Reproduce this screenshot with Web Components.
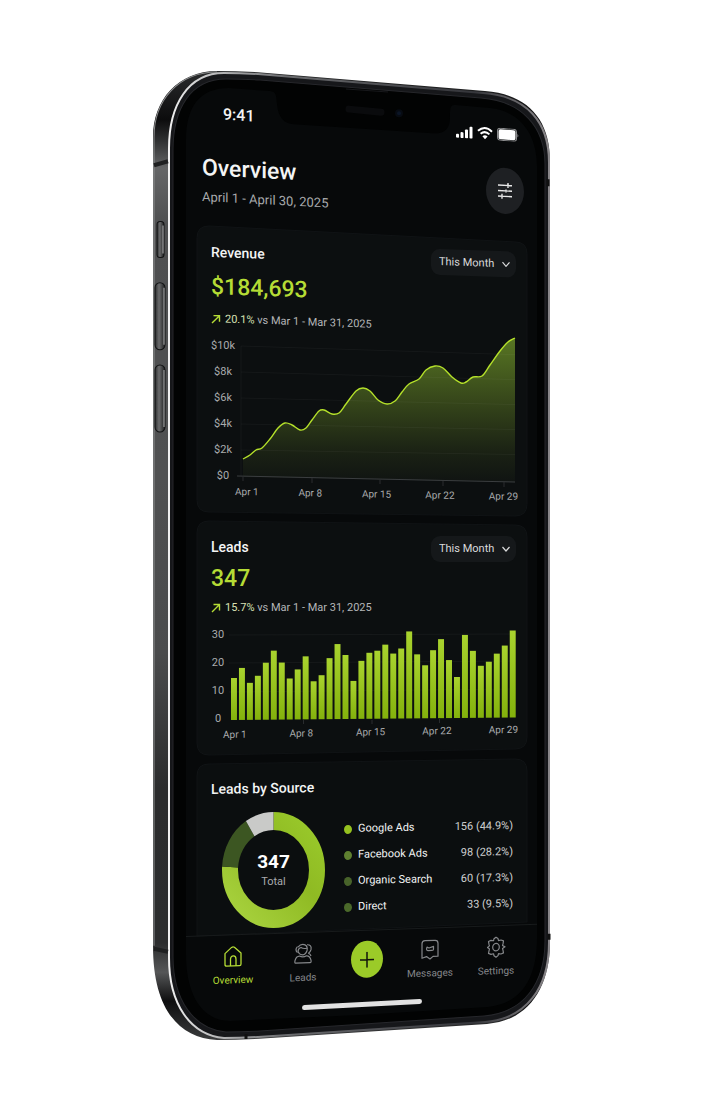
<!DOCTYPE html>
<html lang="en">
<head>
<meta charset="utf-8">
<meta name="viewport" content="width=device-width, initial-scale=1">
<title>Overview</title>
<style>
  body {
    margin: 0;
    background: #fff;
    color: #f4f5f5;
    font-family: Roboto, "Liberation Sans", sans-serif;
    font-size: 11px;
    line-height: 16px;
    --lime: #b5dc35;
    --muted: #a9abad;
  }
  main {
    display: flex;
    justify-content: center;
    padding: 68px 16px 64px;
  }
</style>
</head>
<body>
<main>
  <phone-frame>
    <status-bar></status-bar>
    <page-header heading="Overview">April 1 - April 30, 2025</page-header>
    <card-stack>
      <metric-card heading="Revenue" value="$184,693" change="20.1%" head-tilt="steep" top="16" bottom="4">
        <line-chart slot="chart"></line-chart>
      </metric-card>
      <metric-card heading="Leads" value="347" change="15.7%" compact top="4" bottom="-6">
        <bar-chart slot="chart"></bar-chart>
      </metric-card>
      <source-card></source-card>
    </card-stack>
    <tab-bar></tab-bar>
  </phone-frame>
</main>

<script>
  // Panel behind a card, its top and bottom edges tilted with the phone
  function panel(width, height, top, bottom, radius, fill) {
    const r = radius
    const b = height
    const base = radius && bottom !== -14
      ? `V${b + bottom - r} Q${width} ${b + bottom} ${width - r} ${b + bottom} L${r} ${b} Q0 ${b} 0 ${b - r}`
      : `V${b + bottom} L0 ${b}`
    return `
      <svg class='panel' viewBox='0 0 ${width} ${height}' preserveAspectRatio='none' aria-hidden='true'>
        <path d='M0 ${r} Q0 0 ${r} 0 L${width - r} ${top} Q${width} ${top} ${width} ${top + r} ${base} Z'
          fill='${fill}' stroke='#101315' stroke-width='1'/>
      </svg>`
  }

  class PhoneFrame extends HTMLElement {
    connectedCallback() {
      this.attachShadow({ mode: "open" }).innerHTML = `
        <style>
        :host {
          display: block;
          position: relative;
          width: 100%;
          max-width: 400px;
        }
        .body {
          position: absolute;
          inset: 0;
          width: 100%;
          height: 100%;
        }
        .screen {
          position: relative;
          margin: 0 15px 0 34px;
          padding: 36px 0;
        }
        .home {
          width: 120px;
          height: 5px;
          margin: 12px auto 0;
          border-radius: 3px;
          background: #e2e2e2;
          transform: skewY(-3deg);
        }
        </style>
        <svg class='body' viewBox='152 68 400 972' preserveAspectRatio='none' aria-hidden='true'>
          <defs>
            <linearGradient id='side' x1='0' y1='0' x2='0' y2='1'>
              <stop offset='0' stop-color='#2a2b2c'/>
              <stop offset='.05' stop-color='#0c0c0d'/>
              <stop offset='.07' stop-color='#2c2d2e'/>
              <stop offset='.1' stop-color='#656667'/>
              <stop offset='.16' stop-color='#4e4f50'/>
              <stop offset='.42' stop-color='#505152'/>
              <stop offset='.6' stop-color='#4a4b4c'/>
              <stop offset='.74' stop-color='#2b2c2d'/>
              <stop offset='.9' stop-color='#2c2d2e'/>
              <stop offset='.93' stop-color='#555657'/>
              <stop offset='.96' stop-color='#0e0e0f'/>
              <stop offset='1' stop-color='#3a3b3c'/>
            </linearGradient>
            <linearGradient id='rim' x1='0' y1='0' x2='1' y2='0'>
              <stop offset='0' stop-color='#f1f1f1'/>
              <stop offset='.3' stop-color='#6c6d70'/>
              <stop offset='.8' stop-color='#34353a'/>
              <stop offset='1' stop-color='#8a878a'/>
            </linearGradient>
            <linearGradient id='key' x1='0' y1='0' x2='1' y2='0'>
              <stop offset='0' stop-color='#2a2b2c'/>
              <stop offset='.4' stop-color='#6b6c6d'/>
              <stop offset='1' stop-color='#1b1c1d'/>
            </linearGradient>
          </defs>
          <path fill='url(#side)' d='M153 137 C153 100 178 71 217 71 Q235 71 255 72 L485 91 C528 94 550 120 550 160 V940 C550 985 528 1018 487 1021 L255 1036 Q235 1037 217 1037 C178 1035 153 1005 153 943 Z'/>
          <path fill='none' stroke='#8e8f90' stroke-width='1' d='M154 943 V137 C154 100 179 72 217 72'/>
          <path fill='#16171a' stroke='url(#rim)' stroke-width='2' d='M169 148 C169 105 188 73 224 73 Q240 73 258 74 L483 93 C527 96 549 122 549 162 V940 C549 984 527 1016 485 1019 L258 1034 Q240 1035 224 1035 C190 1032 169 1001 169 955 Z'/>
          <path fill='#020303' stroke='#26272b' stroke-width='1' d='M173 150 C173 108 191 79 226 79 Q242 79 260 80 L481 98 C522 101 545 127 545 164 V938 C545 980 524 1010 484 1013 L260 1028 Q242 1029 226 1029 C194 1026 173 998 173 953 Z'/>
          <path fill='#07090a' d='M186 140 C186 106 200 88 229 88 L270 91 C277 92 276 96 277 104 C278 117 284 124 294 124 L432 133 C444 134 450 129 450 117 C450 108 450 104 456 105 L490 108 C520 111 537 134 537 166 V936 C537 977 520 1001 488 1004 L360 1012 L230 1018 C202 1018 186 992 186 952 Z'/>
          <path stroke='#17181b' stroke-width='1' d='M346 89 L388 92'/>
          <path stroke='#0a0b0d' stroke-width='7' stroke-linecap='round' d='M349 109 L381 112'/>
          <circle cx='399' cy='113' r='4' fill='#070b12'/>
          <circle cx='399' cy='113' r='2' fill='#0b1526'/>
          <path stroke='#1f2021' stroke-width='4' d='M154 165 L168 161 M154 946 L168 949'/>
          <path stroke='#111' stroke-width='3' d='M548 186 V179 M549 931 V937 M246 1036 V1031'/>
          <g fill='url(#key)' stroke='#111213' stroke-width='1'>
            <rect x='157' y='221' width='7' height='36' rx='3'/>
            <rect x='155' y='282' width='10' height='67' rx='5'/>
            <rect x='155' y='364' width='10' height='67' rx='5'/>
          </g>
          <path stroke='#b1b2b3' stroke-width='1' d='M163 225 V253 M164 287 V344 M164 369 V426'/>
        </svg>
        <div class='screen'>
          <slot></slot>
          <div class='home'></div>
        </div>
      `
    }
  }

  class StatusBar extends HTMLElement {
    connectedCallback() {
      this.attachShadow({ mode: "open" }).innerHTML = `
        <style>
        :host {
          display: flex;
          justify-content: space-between;
          align-items: center;
          padding: 0 18px 0 37px;
          transform: skewY(4deg);
          transform-origin: 60px 0;
        }
        time {
          font-size: 16px;
          line-height: 24px;
          font-weight: 500;
        }
        .signs {
          display: flex;
          align-items: center;
          gap: 4px;
        }
        svg {
          display: block;
          fill: #fff;
        }
        </style>
        <time>9:41</time>
        <div class='signs'>
          <svg width='17' height='13' viewBox='0 0 17 13' aria-label='Signal'>
            <rect x='0' y='9' width='3' height='4' rx='1'/>
            <rect x='4.5' y='7' width='3' height='6' rx='1'/>
            <rect x='9' y='4' width='3' height='9' rx='1'/>
            <rect x='13.5' y='1' width='3' height='12' rx='1'/>
          </svg>
          <svg width='16' height='13' viewBox='0 0 16 13' aria-label='Wi-Fi'>
            <path d='M1 4.6 Q8 -2 15 4.6 M3.6 7.4 Q8 3.4 12.4 7.4' fill='none' stroke='#fff' stroke-width='2'/>
            <path d='M5.4 9.6 Q8 7.4 10.6 9.6 L8 12.6 Z'/>
          </svg>
          <svg width='22' height='13' viewBox='0 0 22 13' aria-label='Battery'>
            <rect x='.5' y='.5' width='19' height='12' rx='3' fill='none' stroke='#8b8c8e'/>
            <rect x='1.5' y='1.5' width='17' height='10' rx='2'/>
            <path d='M20.5 4.5 Q22 6.5 20.5 8.5 Z' fill='#a0a0a2'/>
          </svg>
        </div>
      `
    }
  }

  class PageHeader extends HTMLElement {
    connectedCallback() {
      this.attachShadow({ mode: "open" }).innerHTML = `
        <style>
        :host {
          display: flex;
          justify-content: space-between;
          align-items: flex-start;
          margin: 24px 13px 19px 16px;
          transform: skewY(3deg);
          transform-origin: 0 0;
        }
        h1 {
          margin: 0;
          font-size: 23px;
          line-height: 32px;
          font-weight: 500;
        }
        p {
          margin: 3px 0 0;
          font-size: 13px;
          line-height: 20px;
          color: var(--muted);
        }
        button {
          width: 38px;
          height: 46px;
          padding: 0;
          border: 0;
          border-radius: 50%;
          background: #1e2023;
          display: grid;
          place-items: center;
        }
        </style>
        <div>
          <h1>${this.getAttribute("heading")}</h1>
          <p><slot></slot></p>
        </div>
        <button type='button' aria-label='Filters'>
          <svg width='16' height='18' viewBox='0 0 16 18' fill='none' stroke='#e8e8e8' stroke-width='1.4'>
            <path d='M1 3.5 H15 M1 9 H15 M1 14.5 H15 M11 1 V6 M9 7.5 V10.5 M5 12 V17'/>
          </svg>
        </button>
      `
    }
  }

  class CardStack extends HTMLElement {
    connectedCallback() {
      this.attachShadow({ mode: "open" }).innerHTML = `
        <style>
        :host {
          display: flex;
          flex-direction: column;
          gap: 9px;
          padding: 0 10px 0 11px;
        }
        </style>
        <slot></slot>
      `
    }
  }

  class MetricCard extends HTMLElement {
    connectedCallback() {
      const compact = this.hasAttribute("compact")
      const top = Number(this.getAttribute("top"))
      const bottom = Number(this.getAttribute("bottom"))
      this.attachShadow({ mode: "open" }).innerHTML = `
        <style>
        :host {
          display: block;
          position: relative;
          padding: 15px 14px 12px;
          --gap: 8px;
        }
        :host([compact]) {
          --gap: 5px;
        }
        .panel {
          position: absolute;
          inset: 0;
          width: 100%;
          height: 100%;
          overflow: visible;
        }
        .head {
          position: relative;
          display: flex;
          justify-content: space-between;
          align-items: flex-start;
          transform-origin: 0 0;
        }
        :host([head-tilt]) .head {
          transform: skewY(2deg);
        }
        h2 {
          margin: 0;
          font-size: 14px;
          line-height: 22px;
          font-weight: 500;
        }
        .value {
          margin: var(--gap) 0;
          font-size: 23px;
          line-height: 32px;
          font-weight: 500;
          color: var(--lime);
        }
        .change {
          margin: 0;
          display: flex;
          align-items: center;
          gap: 4px;
          font-size: 11px;
          color: #b4b6b8;
        }
        .change b {
          font-weight: 400;
          color: #d9e2b4;
        }
        .pick {
          position: relative;
          margin-right: -3px;
        }
        select {
          appearance: none;
          width: 85px;
          height: 26px;
          margin: 0;
          padding: 0 0 0 8px;
          border: 0;
          border-radius: 9px;
          background: #15181a;
          color: #d9dadb;
          font: 11px/26px Roboto, "Liberation Sans", sans-serif;
        }
        .pick svg {
          position: absolute;
          right: 5px;
          top: 10px;
          pointer-events: none;
        }
        .chart {
          position: relative;
          margin-top: 11px;
        }
        </style>
        ${panel(330, compact ? 234 : 287, top, bottom, 12, "#0c0f10")}
        <div class='head'>
          <div>
            <h2>${this.getAttribute("heading")}</h2>
            <p class='value'>${this.getAttribute("value")}</p>
            <p class='change'>
              <svg width='10' height='10' viewBox='0 0 10 10' fill='none' stroke='#b5dc35' stroke-width='1.4' aria-hidden='true'>
                <path d='M1 9 L8.5 1.5 M2.5 1.5 H8.5 V7.5'/>
              </svg>
              <span><b>${this.getAttribute("change")}</b> vs Mar 1 - Mar 31, 2025</span>
            </p>
          </div>
          <div class='pick'>
            <select aria-label='${this.getAttribute("heading")} period'><option>This Month</option></select>
            <svg width='10' height='7' viewBox='0 0 10 7' fill='none' stroke='#d9dadb' stroke-width='1.2' aria-hidden='true'>
              <path d='M1.5 1 L5 5 L8.5 1'/>
            </svg>
          </div>
        </div>
        <div class='chart'><slot name='chart'></slot></div>
      `
    }
  }

  const axisStyle = `
    .plot {
      display: flex;
      color: var(--muted);
    }
    .y {
      display: flex;
      flex-direction: column;
      justify-content: space-between;
      text-align: center;
    }
    .plot svg {
      flex: 1;
      min-width: 0;
      height: auto;
      overflow: visible;
    }
    .x {
      display: grid;
      grid-template-columns: repeat(4, 1fr) auto;
      font-size: 10px;
      color: var(--muted);
      transform-origin: 0 0;
    }
  `
  const days = ["Apr 1", "Apr 8", "Apr 15", "Apr 22", "Apr 29"]
  const spans = list => list.map(text => `<span>${text}</span>`).join("")

  class LineChart extends HTMLElement {
    connectedCallback() {
      const points = [
        [6, 121], [13, 117], [19, 112], [25, 110], [33, 101], [41, 90], [48, 85], [55, 87], [63, 92], [69, 90],
        [75, 82], [82, 73], [87, 72], [95, 76], [102, 75], [109, 66], [119, 53], [126, 50], [133, 53], [141, 62],
        [150, 66], [158, 63], [165, 54], [172, 46], [182, 41], [189, 32], [198, 28], [206, 30], [215, 39],
        [224, 45], [229, 44], [236, 39], [245, 38], [253, 27], [263, 13], [271, 4], [278, 0]
      ]
      // Smooth the points into one cubic curve
      let line = `M${points[0]}`
      for (let i = 0; i < points.length - 1; i++) {
        const before = points[i - 1] || points[i]
        const a = points[i]
        const b = points[i + 1]
        const after = points[i + 2] || b
        line += ` C${a[0] + (b[0] - before[0]) / 6} ${a[1] + (b[1] - before[1]) / 6}`
          + ` ${b[0] - (after[0] - a[0]) / 6} ${b[1] - (after[1] - a[1]) / 6} ${b[0]} ${b[1]}`
      }
      const grid = [8, 34, 60, 86, 112].map(y => `M4 ${y} L278 ${y + 9 - y / 25}`).join(" ")
      this.attachShadow({ mode: "open" }).innerHTML = `
        <style>
        :host {
          display: block;
        }
        ${axisStyle}
        .y {
          width: 24px;
          height: 146px;
        }
        .plot svg {
          margin: 0 -2px 0 2px;
        }
        .x {
          margin: 0 -5px 0 24px;
          transform: skewY(1deg);
        }
        </style>
        <div class='plot'>
          <div class='y'>${spans(["$10k", "$8k", "$6k", "$4k", "$2k", "$0"])}</div>
          <svg viewBox='0 0 278 146' preserveAspectRatio='none' role='img' aria-label='Revenue by day'>
            <defs>
              <linearGradient id='fill' x1='0' y1='0' x2='0' y2='1'>
                <stop offset='0' stop-color='#587623'/>
                <stop offset='.45' stop-color='#35451a'/>
                <stop offset='.8' stop-color='#1a2114'/>
                <stop offset='1' stop-color='#101412'/>
              </linearGradient>
            </defs>
            <path d='${line} V144 L6 139 Z' fill='url(#fill)'/>
            <path d='${grid} M4 8 V138' fill='none' stroke='#fff' stroke-opacity='.04'/>
            <path d='M0 138 L278 144' stroke='#3b3e40'/>
            <path d='M6 138 V143 M75 140 V145 M143 141 V146 M206 143 V148 M267 144 V149' stroke='#2a2d2f'/>
            <path d='${line}' fill='none' stroke='#b4e02a' stroke-width='1.4'/>
          </svg>
        </div>
        <div class='x'>${spans(days)}</div>
      `
    }
  }

  class BarChart extends HTMLElement {
    connectedCallback() {
      const heights = [
        42, 52, 37, 44, 57, 69, 57, 41, 50, 63, 38, 44, 61, 75, 64, 38, 58, 66,
        68, 74, 65, 70, 87, 64, 53, 68, 79, 58, 41, 83, 67, 52, 56, 64, 72, 87
      ]
      const bars = heights.map((height, i) => {
        const base = 93 - i / 14
        return `<rect x='${i * 8.02}' y='${base - height}' width='6' height='${height}'/>`
      }).join("")
      this.attachShadow({ mode: "open" }).innerHTML = `
        <style>
        :host {
          display: block;
        }
        ${axisStyle}
        .y {
          width: 14px;
          height: 100px;
        }
        .plot svg {
          margin: 0 -3px 0 6px;
        }
        .x {
          margin: 0 -5px 0 12px;
          transform: skewY(-1deg);
        }
        </style>
        <div class='plot'>
          <div class='y'>${spans(["30", "20", "10", "0"])}</div>
          <svg viewBox='0 0 287 100' preserveAspectRatio='none' role='img' aria-label='Leads by day'>
            <defs>
              <linearGradient id='bar' x1='0' y1='0' x2='0' y2='1'>
                <stop offset='0' stop-color='#a9d32e'/>
                <stop offset='1' stop-color='#83b10c'/>
              </linearGradient>
            </defs>
            <path d='M-2 8 L287 7 M-2 36 L287 34 M-2 65 L287 62' stroke='#16191a'/>
            <path d='M73 93 V97 M142 93 V97 M210 92 V96' stroke='#2a2d2f'/>
            <g fill='url(#bar)'>${bars}</g>
          </svg>
        </div>
        <div class='x'>${spans(days)}</div>
      `
    }
  }

  class SourceCard extends HTMLElement {
    connectedCallback() {
      const sources = [
        ["Google Ads", "156 (44.9%)", "#95c11f"],
        ["Facebook Ads", "98 (28.2%)", "#5f8030"],
        ["Organic Search", "60 (17.3%)", "#48632a"],
        ["Direct", "33 (9.5%)", "#4b692a"]
      ]
      this.attachShadow({ mode: "open" }).innerHTML = `
        <style>
        :host {
          display: block;
          position: relative;
          padding: 14px 14px 8px;
        }
        .panel {
          position: absolute;
          inset: 0;
          width: 100%;
          height: 100%;
          overflow: visible;
        }
        h2 {
          position: relative;
          margin: 0 0 12px;
          font-size: 14px;
          line-height: 22px;
          font-weight: 500;
          transform: skewY(-1deg);
          transform-origin: 0 0;
        }
        .row {
          position: relative;
          display: flex;
          justify-content: space-between;
          gap: 19px;
          padding-left: 11px;
        }
        .donut {
          flex: none;
          display: grid;
          place-items: center;
        }
        .donut > * {
          grid-area: 1 / 1;
        }
        .total {
          text-align: center;
          font-size: 11px;
          color: var(--muted);
        }
        .total strong {
          display: block;
          font-size: 19px;
          line-height: 24px;
          font-weight: 700;
          color: #fff;
        }
        ul {
          flex: 1;
          margin: 4px 0 0;
          padding: 0;
          list-style: none;
          transform: skewY(-1deg);
          transform-origin: 0 0;
        }
        li {
          display: flex;
          align-items: center;
          gap: 6px;
          height: 26px;
          font-size: 11px;
        }
        li i {
          width: 8px;
          height: 9px;
          border-radius: 50%;
        }
        li span:last-child {
          margin-left: auto;
          color: #cfd0d1;
        }
        </style>
        ${panel(330, 172, -5, -14, 12, "#0b0e0f")}
        <h2>Leads by Source</h2>
        <div class='row'>
          <div class='donut'>
            <svg width='103' height='116' viewBox='0 0 103 103' preserveAspectRatio='none' role='img' aria-label='Leads by source'>
              <defs>
                <linearGradient id='ring' x1='0' y1='0' x2='1' y2='1'>
                  <stop offset='0' stop-color='#a9d33f'/>
                  <stop offset='.6' stop-color='#8fba23'/>
                  <stop offset='1' stop-color='#9aca2b'/>
                </linearGradient>
              </defs>
              <g fill='none' stroke-width='16' transform='rotate(-90 51.5 51.5)'>
                <circle cx='51.5' cy='51.5' r='43.5' stroke='url(#ring)' pathLength='100' stroke-dasharray='76 24'/>
                <circle cx='51.5' cy='51.5' r='43.5' stroke='#3c5622' pathLength='100' stroke-dasharray='15 85' stroke-dashoffset='-76'/>
                <circle cx='51.5' cy='51.5' r='43.5' stroke='#c9cac8' pathLength='100' stroke-dasharray='9 91' stroke-dashoffset='-91'/>
              </g>
            </svg>
            <div class='total'><strong>347</strong>Total</div>
          </div>
          <ul>
            ${sources.map(([name, count, color]) => `
              <li><i style='background:${color}'></i><span>${name}</span><span>${count}</span></li>
            `).join("")}
          </ul>
        </div>
      `
    }
  }

  class TabBar extends HTMLElement {
    connectedCallback() {
      this.attachShadow({ mode: "open" }).innerHTML = `
        <style>
        :host {
          display: block;
          transform: skewY(-2deg);
          transform-origin: 0 0;
        }
        nav {
          display: grid;
          grid-template-columns: 35fr 35fr 29fr 34fr 32fr;
          justify-items: center;
          padding: 10px 9px 0 12px;
          border-top: 1px solid #181b1c;
        }
        a {
          display: flex;
          flex-direction: column;
          align-items: center;
          gap: 5px;
          font-size: 10px;
          color: #85878a;
          text-decoration: none;
        }
        a[aria-current] {
          color: var(--lime);
        }
        svg {
          display: block;
          fill: none;
          stroke: currentColor;
        }
        button {
          width: 32px;
          height: 37px;
          padding: 0;
          border: 0;
          border-radius: 50%;
          background: #9bcb28;
          color: #10150a;
          display: grid;
          place-items: center;
        }
        </style>
        <nav>
          <a href='#overview' aria-current='page'>
            <svg width='20' height='22' viewBox='0 0 20 22' stroke-width='1.3' stroke-linejoin='round'>
              <path d='M2 8 L8.6 2 Q10 1 11.4 2 L18 8 V19 Q18 20.5 16.5 20.5 H3.5 Q2 20.5 2 19 Z'/>
              <path d='M7.5 20.5 V14 Q7.5 10.5 10.5 10.5 Q13 10.5 13 14 V20.5'/>
            </svg>
            Overview
          </a>
          <a href='#leads'>
            <svg width='20' height='22' viewBox='0 0 20 22' stroke-width='1.2' stroke-linejoin='round'>
              <path d='M2.5 20 Q1.5 20 2 17.5 Q3 13 6.5 13 Q10 15 13.5 13 Q17 13 18 17.5 Q18.5 20 17 20 Z'/>
              <path d='M5 4 Q8 .5 12 2 Q15 3.5 14 8 Q12.5 12 9.5 12 Q6 11.5 5 8 Q5.5 5 8 4.5 Q10 6 13.5 5.5'/>
              <path d='M4.5 3.5 Q1.5 6.5 4.5 9.5 M14 2 Q19 2 18 7 Q17.5 9 15.5 10.5 Q17.5 11.5 18 13.5'/>
            </svg>
            Leads
          </a>
          <button type='button' aria-label='Add'>
            <svg width='14' height='16' viewBox='0 0 14 16' stroke-width='1.5'><path d='M7 0 V16 M0 8 H14'/></svg>
          </button>
          <a href='#messages'>
            <svg width='20' height='22' viewBox='0 0 20 22' stroke-width='1.2' stroke-linejoin='round'>
              <path d='M2 5 Q2 2 5 2 H15 Q18 2 18 5 V18 H13 L10 20.5 L6.5 18 L2 19.5 Z'/>
              <path d='M7 8.5 L9 9.5 L13.5 8 V11 Q13.5 12 12 12 H8 Q6.5 12 6.5 10.5 Z'/>
            </svg>
            Messages
          </a>
          <a href='#settings'>
            <svg width='20' height='22' viewBox='0 0 20 22' stroke-width='1.2' stroke-linejoin='round'>
              <path d='M8 2.5 L10 1 L12 2.5 L12.5 4.5 L15 4 L17.5 5 L17 8 L16.5 9.5 L19 11 L16.5 12.5 L17 14.5 L17.5 17 L15 18 L12.5 17.5 L12 19.5 L10 21 L8 19.5 L7.5 17.5 L5 18 L2.5 17 L3 14.5 L3.5 12.5 L1.5 11 L3.5 9.5 L3 8 L2.5 5 L5 4 L7.5 4.5 Z'/>
              <ellipse cx='10' cy='11' rx='3.3' ry='3.7'/>
            </svg>
            Settings
          </a>
        </nav>
      `
    }
  }

  customElements.define("phone-frame", PhoneFrame)
  customElements.define("status-bar", StatusBar)
  customElements.define("page-header", PageHeader)
  customElements.define("card-stack", CardStack)
  customElements.define("metric-card", MetricCard)
  customElements.define("line-chart", LineChart)
  customElements.define("bar-chart", BarChart)
  customElements.define("source-card", SourceCard)
  customElements.define("tab-bar", TabBar)
</script>
</body>
</html>
